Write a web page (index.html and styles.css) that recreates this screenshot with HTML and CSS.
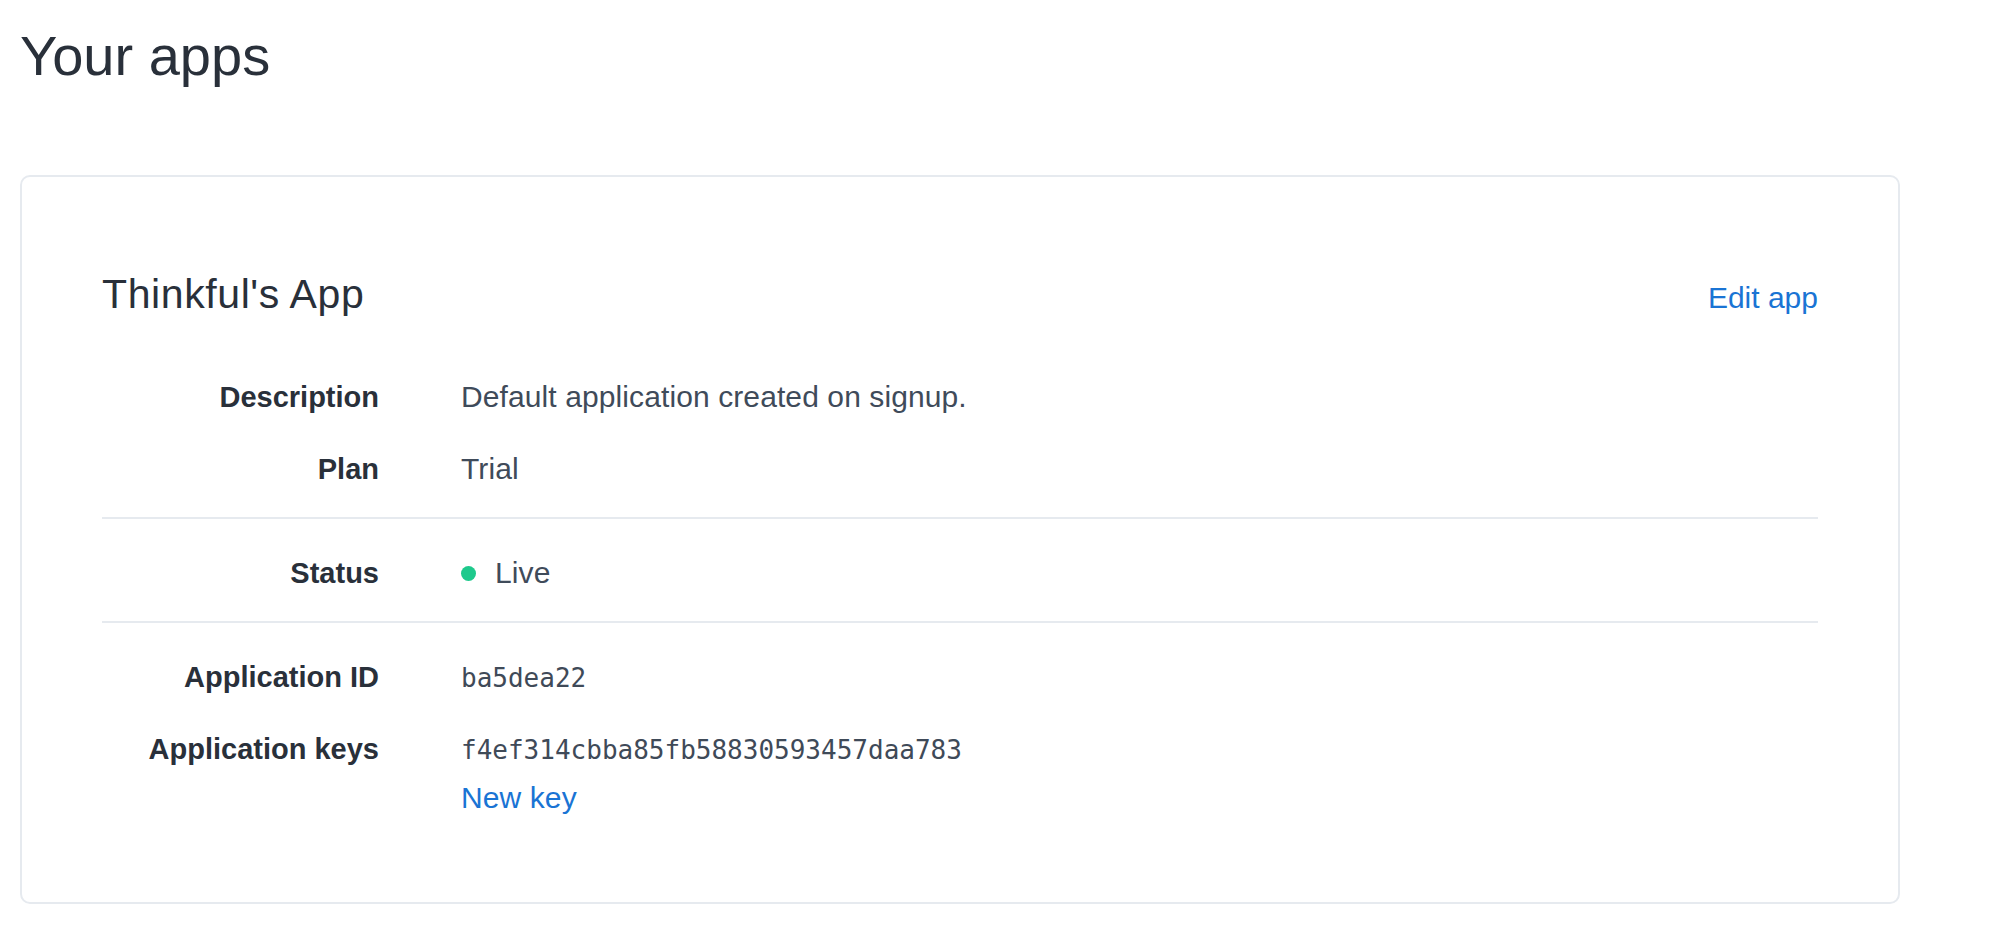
FILE: index.html
```html
<!DOCTYPE html>
<html lang="en">
<head>
<meta charset="utf-8">
<title>Your apps</title>
<link rel="stylesheet" href="styles.css">
</head>
<body>
<main class="page">
  <h1 class="page-title">Your apps</h1>
  <section class="card">
    <header class="card-head">
      <h2 class="app-name">Thinkful's App</h2>
      <a class="link edit-link" href="#">Edit app</a>
    </header>

    <div class="section">
      <div class="row">
        <div class="label">Description</div>
        <div class="value">Default application created on signup.</div>
      </div>
      <div class="row">
        <div class="label">Plan</div>
        <div class="value">Trial</div>
      </div>
    </div>

    <div class="section">
      <div class="row">
        <div class="label">Status</div>
        <div class="value"><span class="dot"></span>Live</div>
      </div>
    </div>

    <div class="section section-keys">
      <div class="row">
        <div class="label">Application ID</div>
        <div class="value mono">ba5dea22</div>
      </div>
      <div class="row">
        <div class="label">Application keys</div>
        <div class="value">
          <div class="mono">f4ef314cbba85fb58830593457daa783</div>
          <a class="link new-key" href="#">New key</a>
        </div>
      </div>
    </div>
  </section>
</main>
</body>
</html>
```

FILE: styles.css
```css
* {
  box-sizing: border-box;
}

html, body {
  margin: 0;
  padding: 0;
  background: #ffffff;
}

body {
  font-family: "Liberation Sans", Arial, Helvetica, sans-serif;
  color: #2a313a;
}

.page {
  padding: 0 20px;
}

.page-title {
  margin: 23px 0 0;
  font-size: 56px;
  line-height: 66px;
  font-weight: 400;
  color: #29303a;
}

.card {
  margin-top: 86px;
  width: 1880px;
  border: 2px solid #e6eaef;
  border-radius: 10px;
  padding: 93px 80px 56px;
  background: #fff;
}

.card-head {
  display: flex;
  justify-content: space-between;
  align-items: baseline;
  margin-bottom: 23px;
}

.app-name {
  margin: 0;
  font-size: 41px;
  line-height: 48px;
  font-weight: 400;
  letter-spacing: 0.6px;
  color: #29303a;
}

.link {
  color: #1a74d4;
  text-decoration: none;
  font-size: 30px;
  line-height: 44px;
}

.section {
  padding: 32px 0 26px;
  border-bottom: 2px solid #e6eaef;
}

.section:last-child {
  border-bottom: none;
}

.row {
  display: grid;
  grid-template-columns: 277px 1fr;
  column-gap: 82px;
  align-items: baseline;
}

.row + .row {
  margin-top: 28px;
}

.section-keys .row + .row {
  margin-top: 26px;
}

.label {
  text-align: right;
  font-size: 29px;
  line-height: 44px;
  font-weight: 700;
  color: #29303a;
}

.value {
  font-size: 30px;
  line-height: 44px;
  letter-spacing: 0.1px;
  color: #3f4b5a;
}

.mono {
  font-family: "DejaVu Sans Mono", "Liberation Mono", monospace;
  font-size: 26px;
  line-height: 46px;
  letter-spacing: 0;
  color: #3f4a58;
}

.new-key {
  display: block;
  margin-top: 3px;
}

.dot {
  display: inline-block;
  width: 15px;
  height: 15px;
  border-radius: 50%;
  background: #1ec98c;
  vertical-align: middle;
  margin-right: 19px;
  position: relative;
  top: -2px;
}
```
